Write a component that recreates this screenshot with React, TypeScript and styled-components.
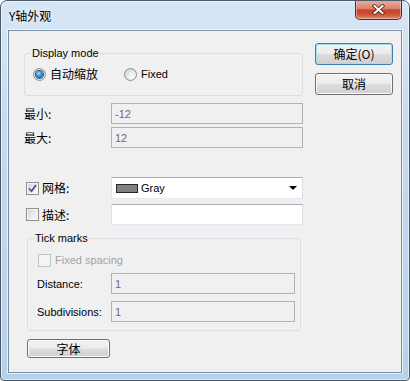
import styled, { createGlobalStyle } from "styled-components";

const cjk = `"Noto Sans CJK SC", "Liberation Sans", sans-serif`;
const latin = `"Liberation Sans", "Noto Sans CJK SC", sans-serif`;

const GlobalStyle = createGlobalStyle`
  html, body {
    margin: 0;
    padding: 0;
    background: #ffffff;
  }
  body {
    font-family: ${latin};
    font-size: 11px;
    color: #000;
  }
  * {
    box-sizing: border-box;
  }
`;

const Window = styled.div`
  width: 410px;
  height: 381px;
  display: flex;
  flex-direction: column;
  border: 1px solid #4d5a69;
  border-radius: 7px 7px 4px 4px;
  overflow: hidden;
  background:
    radial-gradient(ellipse 90px 14px at 40% 42%, rgba(105, 145, 190, 0.35), transparent),
    radial-gradient(ellipse 70px 10px at 62% 40%, rgba(105, 145, 190, 0.3), transparent),
    linear-gradient(180deg, #d7e6f5 0%, #c4daf0 35%, #b8d1eb 100%);
  box-shadow: inset 0 0 0 1px rgba(255, 255, 255, 0.55);
`;

const TitleBar = styled.div`
  height: 29px;
  flex: none;
  display: flex;
  align-items: center;
  padding-left: 8px;
`;

const Title = styled.span`
  flex: 1;
  font-family: ${cjk};
  font-size: 12px;
  line-height: 14px;
  color: #000;
  text-shadow: 0 0 6px rgba(255, 255, 255, 0.9);
`;

const CloseButton = styled.button`
  align-self: flex-start;
  width: 47px;
  height: 20px;
  margin: -1px 7px 0 0;
  padding: 0;
  display: flex;
  align-items: center;
  justify-content: center;
  border: 1px solid #6e2219;
  border-top: none;
  border-radius: 0 0 5px 5px;
  background: linear-gradient(
    180deg,
    #eab0a2 0%,
    #dd826c 45%,
    #c6432a 52%,
    #cc5236 75%,
    #df8a6a 100%
  );
  box-shadow: inset 0 0 0 1px rgba(255, 230, 220, 0.45);
`;

const Frame = styled.div`
  flex: 1;
  display: flex;
  padding: 0 7px 7px;
`;

const Client = styled.div`
  flex: 1;
  display: flex;
  align-items: flex-start;
  padding: 12px 8px 0 15px;
  background: #f0f0f0;
  border: 1px solid #7b8ea3;
  box-shadow: 0 0 0 1px rgba(255, 255, 255, 0.65);
`;

const LeftColumn = styled.div`
  width: 279px;
  margin-top: 3px;
  display: flex;
  flex-direction: column;
`;

const RightColumn = styled.div`
  margin-left: 12px;
  display: flex;
  flex-direction: column;
  gap: 8px;
`;

const GroupBox = styled.fieldset<{ $width: number; $pad: string; $left?: number; $top?: number }>`
  width: ${(p) => p.$width}px;
  min-width: 0;
  margin: ${(p) => p.$top ?? 0}px 0 0 ${(p) => p.$left ?? 0}px;
  padding: ${(p) => p.$pad};
  border: 1px solid #d5dfe5;
  border-radius: 3px;
`;

const Legend = styled.legend`
  padding: 0 1px;
  font-family: ${latin};
  font-size: 11px;
  line-height: 14px;
  color: #000;
`;

const RadioRow = styled.div`
  height: 14px;
  margin-left: 2px;
  display: flex;
  align-items: center;
`;

const RadioOption = styled.label<{ $width?: number }>`
  width: ${(p) => (p.$width ? `${p.$width}px` : "auto")};
  display: flex;
  align-items: center;
  gap: 4px;
`;

const Radio = styled.span<{ $checked?: boolean }>`
  width: 13px;
  height: 13px;
  flex: none;
  border-radius: 50%;
  border: 1px solid #8e8f8f;
  background: radial-gradient(circle at 65% 70%, #ffffff 0%, #e9e9e9 45%, #c8c8c8 100%);
  display: flex;
  align-items: center;
  justify-content: center;

  &::after {
    content: "";
    display: ${(p) => (p.$checked ? "block" : "none")};
    width: 7px;
    height: 7px;
    border-radius: 50%;
    background: radial-gradient(circle at 40% 35%, #a6e6ff 0%, #2f8ed6 45%, #12508f 100%);
    box-shadow: 0 0 0 1px #1d4f80;
  }
`;

const CjkText = styled.span<{ $muted?: boolean }>`
  font-family: ${cjk};
  font-size: 12px;
  line-height: 14px;
  color: ${(p) => (p.$muted ? "#a0a0a0" : "#000")};
`;

const LatinText = styled.span<{ $muted?: boolean }>`
  font-family: ${latin};
  font-size: 11px;
  line-height: 14px;
  color: ${(p) => (p.$muted ? "#a3a3a3" : "#000")};
`;

const FieldRow = styled.div<{ $label: number; $top: number }>`
  display: grid;
  grid-template-columns: ${(p) => p.$label}px 1fr;
  align-items: center;
  margin-top: ${(p) => p.$top}px;
`;

const CheckLabel = styled.label`
  display: flex;
  align-items: center;
  gap: 3px;
  padding-left: 2px;
`;

const CheckBox = styled.span<{ $disabled?: boolean }>`
  width: 13px;
  height: 13px;
  flex: none;
  display: flex;
  align-items: center;
  justify-content: center;
  border: 1px solid ${(p) => (p.$disabled ? "#c2c2c2" : "#8e8f8f")};
  background: ${(p) =>
    p.$disabled ? "#f4f4f4" : "linear-gradient(135deg, #cfd2d6 0%, #eeeeee 60%, #fbfbfb 100%)"};
  box-shadow: inset 0 0 0 1px ${(p) => (p.$disabled ? "#f4f4f4" : "#f6f6f6")};
`;

const TextInput = styled.input<{ $disabled?: boolean }>`
  width: 100%;
  height: 21px;
  margin: 0;
  padding: 0 3px;
  font-family: ${latin};
  font-size: 11px;
  color: #6d6d6d;
  border: 1px solid;
  border-color: ${(p) => (p.$disabled ? "#adb2b5" : "#abadb3 #dbdfe6 #e3e9ef #e2e3ea")};
  background: ${(p) => (p.$disabled ? "#f0f0f0" : "#ffffff")};
  outline: none;
`;

const Combo = styled.div`
  height: 22px;
  display: flex;
  align-items: center;
  gap: 3px;
  padding: 0 5px 0 4px;
  border: 1px solid;
  border-color: #abadb3 #dbdfe6 #e3e9ef #e2e3ea;
  background: #ffffff;
`;

const Swatch = styled.span<{ $color: string }>`
  width: 22px;
  height: 9px;
  flex: none;
  background: ${(p) => p.$color};
  border: 1px solid #262626;
`;

const ComboText = styled.span`
  flex: 1;
  font-family: ${latin};
  font-size: 11px;
  color: #000;
`;

const DropArrow = styled.span`
  width: 0;
  height: 0;
  border-left: 4px solid transparent;
  border-right: 4px solid transparent;
  border-top: 4px solid #000;
`;

const GroupBody = styled.div<{ $indent: number }>`
  margin-left: ${(p) => p.$indent}px;
  display: flex;
  flex-direction: column;
`;

const PlainRow = styled.div`
  height: 14px;
  display: flex;
  align-items: center;
  gap: 4px;
  padding-left: 1px;
`;

const PushButton = styled.button<{ $primary?: boolean; $width: number; $height: number; $top?: number; $left?: number }>`
  width: ${(p) => p.$width}px;
  height: ${(p) => p.$height}px;
  margin: ${(p) => p.$top ?? 0}px 0 0 ${(p) => p.$left ?? 0}px;
  padding: 0;
  font-family: ${cjk};
  font-size: 12px;
  line-height: 14px;
  color: #000;
  border: 1px solid ${(p) => (p.$primary ? "#3c7fb1" : "#707070")};
  border-radius: 3px;
  background: linear-gradient(180deg, #f3f3f3 0%, #ebebeb 48%, #dddddd 52%, #cfcfcf 100%);
  box-shadow: inset 0 0 0 1px ${(p) => (p.$primary ? "#a8dcf5" : "#fbfbfb")};
`;

const CheckMark = () => (
  <svg width="9" height="9" viewBox="0 0 9 9">
    <path d="M1 4.5 L3.5 7.2 L8 1" fill="none" stroke="#3c4f8f" strokeWidth="1.7" />
  </svg>
);

const CloseGlyph = () => (
  <svg width="13" height="11" viewBox="0 0 13 11">
    <path d="M2.5 2 L10.5 9 M10.5 2 L2.5 9" stroke="#5a1810" strokeWidth="3.6" strokeLinecap="square" />
    <path d="M2.5 2 L10.5 9 M10.5 2 L2.5 9" stroke="#ffffff" strokeWidth="2" strokeLinecap="square" />
  </svg>
);

export default function App() {
  return (
    <>
      <GlobalStyle />
      <Window>
        <TitleBar>
          <Title>Y轴外观</Title>
          <CloseButton aria-label="关闭">
            <CloseGlyph />
          </CloseButton>
        </TitleBar>
        <Frame>
          <Client>
            <LeftColumn>
              <GroupBox $width={279} $pad="7px 0 14px 6px">
                <Legend>Display mode</Legend>
                <RadioRow>
                  <RadioOption $width={91}>
                    <Radio $checked />
                    <CjkText>自动缩放</CjkText>
                  </RadioOption>
                  <RadioOption>
                    <Radio />
                    <LatinText>Fixed</LatinText>
                  </RadioOption>
                </RadioRow>
              </GroupBox>

              <FieldRow $label={87} $top={7}>
                <CjkText>最小:</CjkText>
                <TextInput $disabled disabled defaultValue="-12" />
              </FieldRow>
              <FieldRow $label={87} $top={3}>
                <CjkText>最大:</CjkText>
                <TextInput $disabled disabled defaultValue="12" />
              </FieldRow>

              <FieldRow $label={87} $top={29}>
                <CheckLabel>
                  <CheckBox>
                    <CheckMark />
                  </CheckBox>
                  <CjkText>网格:</CjkText>
                </CheckLabel>
                <Combo>
                  <Swatch $color="#808080" />
                  <ComboText>Gray</ComboText>
                  <DropArrow />
                </Combo>
              </FieldRow>
              <FieldRow $label={87} $top={5}>
                <CheckLabel>
                  <CheckBox />
                  <CjkText>描述:</CjkText>
                </CheckLabel>
                <TextInput defaultValue="" />
              </FieldRow>

              <GroupBox $width={274} $pad="8px 5px 8px 6px" $left={3} $top={6}>
                <Legend>Tick marks</Legend>
                <GroupBody $indent={3}>
                  <PlainRow>
                    <CheckBox $disabled />
                    <LatinText $muted>Fixed spacing</LatinText>
                  </PlainRow>
                  <FieldRow $label={74} $top={6}>
                    <LatinText>Distance:</LatinText>
                    <TextInput $disabled disabled defaultValue="1" />
                  </FieldRow>
                  <FieldRow $label={74} $top={7}>
                    <LatinText>Subdivisions:</LatinText>
                    <TextInput $disabled disabled defaultValue="1" />
                  </FieldRow>
                </GroupBody>
              </GroupBox>

              <PushButton $width={83} $height={19} $top={8} $left={3}>
                字体
              </PushButton>
            </LeftColumn>

            <RightColumn>
              <PushButton $primary $width={78} $height={22}>
                确定(O)
              </PushButton>
              <PushButton $width={78} $height={22}>
                取消
              </PushButton>
            </RightColumn>
          </Client>
        </Frame>
      </Window>
    </>
  );
}
